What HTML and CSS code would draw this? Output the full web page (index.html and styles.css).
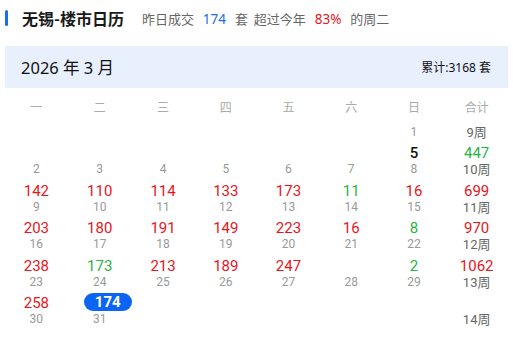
FILE: index.html
```html
<!DOCTYPE html>
<html lang="zh">
<head>
<meta charset="utf-8">
<link rel="stylesheet" href="styles.css">
</head>
<body>
<div class="page">
  <div class="top">
    <span class="bar"></span>
    <span class="title">无锡-楼市日历</span>
    <span class="sub">昨日成交 <b class="blue">174</b> 套 超过今年 <b class="red">83%</b> 的周二</span>
  </div>
  <div class="band">
    <span class="month">2026 年 3 月</span>
    <span class="sum">累计:3168 套</span>
  </div>
  <div class="grid">
    <div class="h">一</div><div class="h">二</div><div class="h">三</div><div class="h">四</div><div class="h">五</div><div class="h">六</div><div class="h">日</div><div class="h">合计</div>

    <div class="c"><span class="d"></span></div>
    <div class="c"><span class="d"></span></div>
    <div class="c"><span class="d"></span></div>
    <div class="c"><span class="d"></span></div>
    <div class="c"><span class="d"></span></div>
    <div class="c"><span class="d"></span></div>
    <div class="c"><span class="d">1</span></div>
    <div class="c"><span class="d wk">9周</span></div>

    <div class="c"><span class="v"></span><span class="d">2</span></div>
    <div class="c"><span class="v"></span><span class="d">3</span></div>
    <div class="c"><span class="v"></span><span class="d">4</span></div>
    <div class="c"><span class="v"></span><span class="d">5</span></div>
    <div class="c"><span class="v"></span><span class="d">6</span></div>
    <div class="c"><span class="v"></span><span class="d">7</span></div>
    <div class="c"><span class="v black">5</span><span class="d">8</span></div>
    <div class="c"><span class="v green">447</span><span class="d wk">10周</span></div>

    <div class="c"><span class="v red">142</span><span class="d">9</span></div>
    <div class="c"><span class="v red">110</span><span class="d">10</span></div>
    <div class="c"><span class="v red">114</span><span class="d">11</span></div>
    <div class="c"><span class="v red">133</span><span class="d">12</span></div>
    <div class="c"><span class="v red">173</span><span class="d">13</span></div>
    <div class="c"><span class="v green">11</span><span class="d">14</span></div>
    <div class="c"><span class="v red">16</span><span class="d">15</span></div>
    <div class="c"><span class="v red">699</span><span class="d wk">11周</span></div>

    <div class="c"><span class="v red">203</span><span class="d">16</span></div>
    <div class="c"><span class="v red">180</span><span class="d">17</span></div>
    <div class="c"><span class="v red">191</span><span class="d">18</span></div>
    <div class="c"><span class="v red">149</span><span class="d">19</span></div>
    <div class="c"><span class="v red">223</span><span class="d">20</span></div>
    <div class="c"><span class="v red">16</span><span class="d">21</span></div>
    <div class="c"><span class="v green">8</span><span class="d">22</span></div>
    <div class="c"><span class="v red">970</span><span class="d wk">12周</span></div>

    <div class="c"><span class="v red">238</span><span class="d">23</span></div>
    <div class="c"><span class="v green">173</span><span class="d">24</span></div>
    <div class="c"><span class="v red">213</span><span class="d">25</span></div>
    <div class="c"><span class="v red">189</span><span class="d">26</span></div>
    <div class="c"><span class="v red">247</span><span class="d">27</span></div>
    <div class="c"><span class="v"></span><span class="d">28</span></div>
    <div class="c"><span class="v green">2</span><span class="d">29</span></div>
    <div class="c"><span class="v red">1062</span><span class="d wk">13周</span></div>

    <div class="c"><span class="v red">258</span><span class="d">30</span></div>
    <div class="c"><span class="v"><span class="today">174</span></span><span class="d">31</span></div>
    <div class="c"><span class="v"></span><span class="d"></span></div>
    <div class="c"><span class="v"></span><span class="d"></span></div>
    <div class="c"><span class="v"></span><span class="d"></span></div>
    <div class="c"><span class="v"></span><span class="d"></span></div>
    <div class="c"><span class="v"></span><span class="d"></span></div>
    <div class="c"><span class="v"></span><span class="d wk">14周</span></div>
  </div>
</div>
</body>
</html>
```
FILE: styles.css
```css
* { box-sizing: border-box; }
html, body { margin: 0; padding: 0; background: #fff; }
body {
  font-family: "Noto Sans", "Noto Sans CJK SC", sans-serif;
  color: #222;
}
.page { padding: 0 5px; width: 513px; }
.top {
  display: flex;
  align-items: center;
  height: 36px;
}
.bar {
  width: 3px;
  height: 16px;
  border-radius: 2px;
  background: #1a6fe8;
  margin-right: 14px;
}
.title {
  font-size: 16px;
  font-weight: bold;
  color: #1a1a1a;
  margin-right: 18px;
  font-family: "Noto Sans CJK SC", sans-serif;
}
.sub {
  font-size: 13px;
  color: #666;
  font-family: "Noto Sans CJK SC", sans-serif;
  word-spacing: 3px;
}
.sub b { font-weight: normal; font-family: "Noto Sans", sans-serif; margin: 0 3px; font-size: 13.5px; }
.blue { color: #1a6fe8; }
.red { color: #e8151b; }
.green { color: #28b446; }
.black { color: #111; font-weight: 500; }
.band {
  margin-top: 10px;
  height: 42px;
  background: #e8effd;
  display: flex;
  align-items: center;
  justify-content: space-between;
  padding: 0 17px 0 16px;
}
.month { font-size: 16.5px; color: #111; font-family: "Noto Sans", "Noto Sans CJK SC", sans-serif; }
.sum { font-size: 12px; color: #111; font-family: "Noto Sans", "Noto Sans CJK SC", sans-serif; }
.grid {
  display: grid;
  grid-template-columns: repeat(8, 1fr);
  font-family: Roboto, "Noto Sans CJK SC", sans-serif;
}
.h {
  text-align: center;
  font-size: 12px;
  color: #aaa;
  line-height: 18px;
  padding-top: 10px;
  padding-bottom: 5px;
  font-family: "Noto Sans CJK SC", sans-serif;
}
.c {
  display: flex;
  flex-direction: column;
  align-items: center;
  padding-top: 4.5px;
}
.v {
  height: 20px;
  line-height: 20px;
  font-size: 15px;
  display: flex;
  justify-content: center;
}
.d {
  height: 13px;
  line-height: 13px;
  font-size: 12px;
  color: #999;
}
.d.wk { color: #666; font-size: 13px; }
.today {
  display: block;
  width: 48px;
  height: 18px;
  line-height: 18px;
  border-radius: 9px;
  background: #0b64f4;
  color: #fff;
  font-weight: bold;
  text-align: center;
  margin-left: 16px;
}
```
